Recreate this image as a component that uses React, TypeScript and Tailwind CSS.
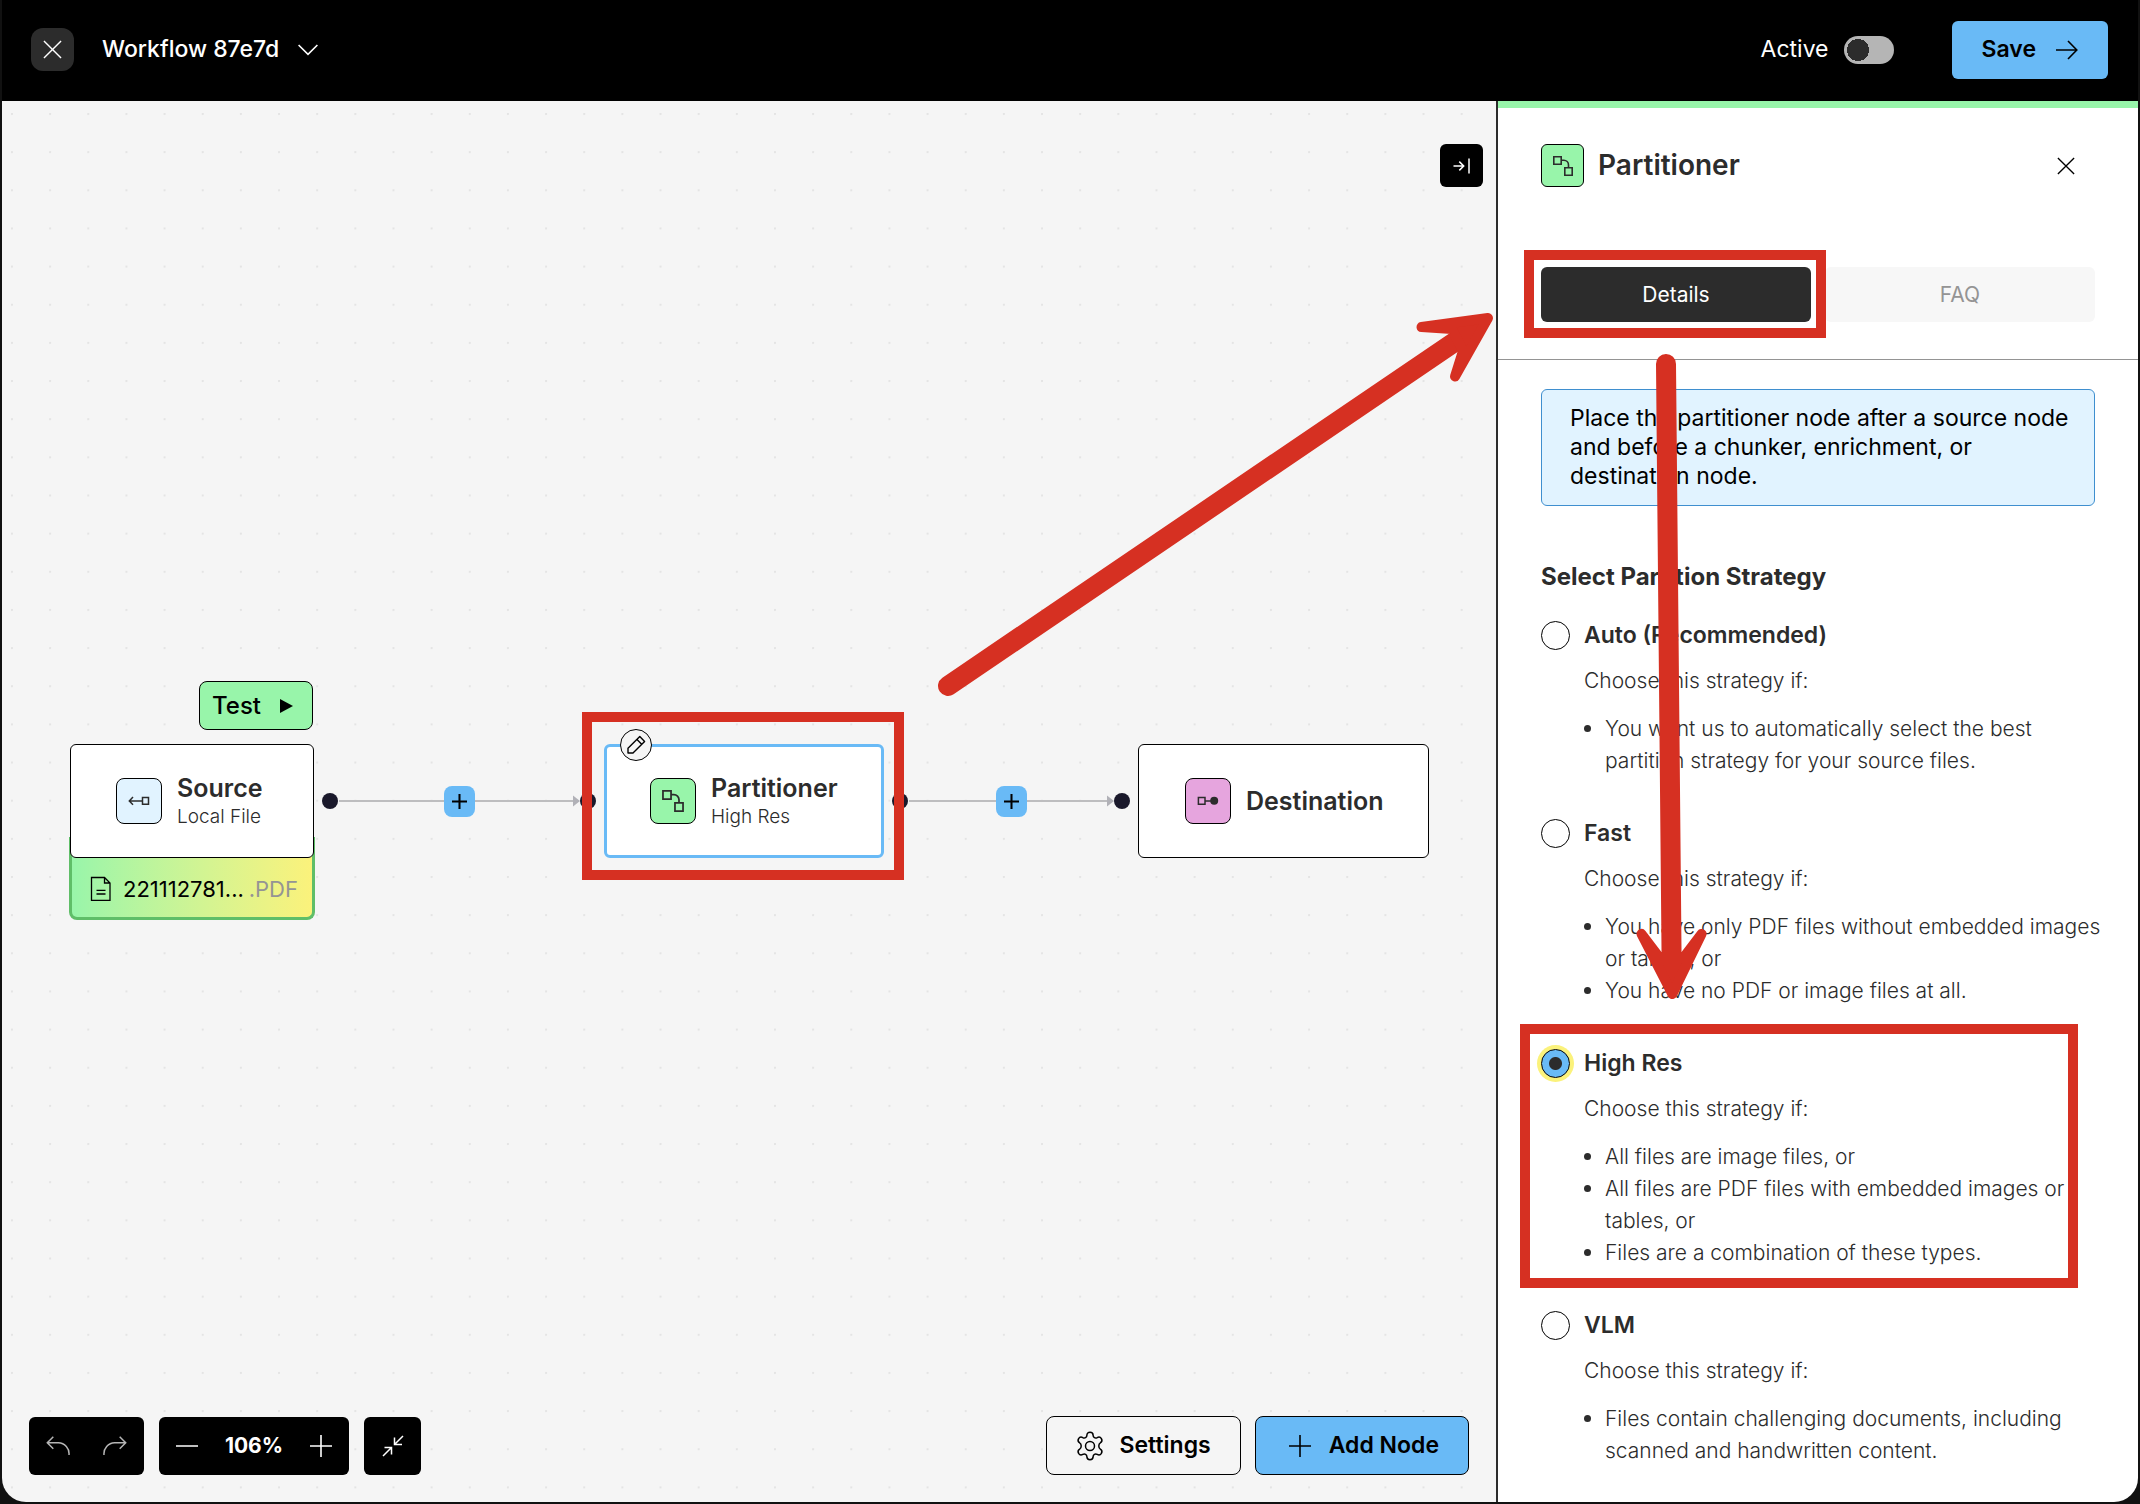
import React, { useId, useState } from "react";
import clsx from "clsx";

interface Strategy {
  id: string;
  label: string;
  reasons: string[];
}

const STRATEGIES: Strategy[] = [
  {
    id: "auto",
    label: "Auto (Recommended)",
    reasons: [
      "You want us to automatically select the best partition strategy for your source files.",
    ],
  },
  {
    id: "fast",
    label: "Fast",
    reasons: [
      "You have only PDF files without embedded images or tables, or",
      "You have no PDF or image files at all.",
    ],
  },
  {
    id: "hi_res",
    label: "High Res",
    reasons: [
      "All files are image files, or",
      "All files are PDF files with embedded images or tables, or",
      "Files are a combination of these types.",
    ],
  },
  {
    id: "vlm",
    label: "VLM",
    reasons: [
      "Files contain challenging documents, including scanned and handwritten content.",
    ],
  },
];

/* ---------- Icons ---------- */

const CloseIcon = ({ className }: { className?: string }) => (
  <svg viewBox="0 0 20 20" className={className} fill="none" stroke="currentColor" strokeWidth="1.5">
    <path d="M1 1 19 19M19 1 1 19" />
  </svg>
);

const ChevronIcon = () => (
  <svg viewBox="0 0 20 12" className="h-3 w-5" fill="none" stroke="currentColor" strokeWidth="1.6">
    <path d="m.6 1 9.4 9.4L19.400 1" />
  </svg>
);

const ArrowRightIcon = () => (
  <svg viewBox="0 0 22 20" className="h-5 w-[22px]" fill="none" stroke="currentColor" strokeWidth="1.6">
    <path d="M0 10h20.500M12 1l8.800 9L12 19" />
  </svg>
);

const PlusIcon = ({ className }: { className?: string }) => (
  <svg viewBox="0 0 22 22" className={className} fill="none" stroke="currentColor">
    <path d="M0 11h22M11 0v22" />
  </svg>
);

const PartitionIcon = ({ className }: { className?: string }) => (
  <svg viewBox="0 0 22 22" className={className} fill="none" stroke="currentColor" strokeWidth="1.6">
    <path d="M1.800 1.800h7.400v7.400H1.800zM12.800 12.800h7.400v7.400h-7.400z" />
    <path d="M9.200 5.200h2.600a4.700 4.700 0 0 1 4.700 4.700v2.900" />
  </svg>
);

const SourceIcon = () => (
  <svg viewBox="0 0 22 12" className="h-3 w-[22px]" fill="none" stroke="currentColor" strokeWidth="1.500">
    <path d="M14.500 2.600h6v6.600h-6zM14.500 5.900H1.500M5 2 1.300 5.900 5 9.800" />
  </svg>
);

const DestinationIcon = () => (
  <svg viewBox="0 0 22 12" className="h-3 w-[22px]" fill="none" stroke="currentColor" strokeWidth="1.500">
    <path d="M1.400 2.500h6.600v6.800H1.400zM8 5.900h7" />
    <circle cx="17.200" cy="5.700" r="4" fill="currentColor" stroke="none" />
  </svg>
);

const FileIcon = () => (
  <svg viewBox="0 0 22 26" className="h-[26px] w-[22px] shrink-0" fill="none" stroke="currentColor" strokeWidth="1.300">
    <path d="M1.500 1.500h13l5.500 5.500v17.300H1.500zM14.500 1.500V7H20M6.500 14.300h9M6.500 18h9" />
  </svg>
);

const PencilIcon = () => (
  <svg viewBox="0 0 20 20" className="size-5" fill="none" stroke="currentColor" strokeWidth="1.400" strokeLinejoin="round">
    <path d="M2 18v-4.800L13.800 1.600l4.800 4.800L7 18zM11 4.500l4.700 4.700" />
  </svg>
);

const CollapseRightIcon = () => (
  <svg viewBox="0 0 18 16" className="h-4 w-[18px]" fill="none" stroke="currentColor" strokeWidth="1.500">
    <path d="M.5 8h10M6.300 3.600 10.700 8l-4.400 4.400M16 .5v15" />
  </svg>
);

const UndoIcon = ({ className }: { className?: string }) => (
  <svg viewBox="0 0 24 20" className={clsx("h-5 w-6", className)} fill="none" stroke="currentColor" strokeWidth="1.500">
    <path d="M7.300.8 1.300 6.800l6 6M1.300 6.800h11A11 11 0 0 1 23 19" />
  </svg>
);

const ShrinkIcon = () => (
  <svg viewBox="0 0 22 22" className="size-[22px]" fill="none" stroke="currentColor" strokeWidth="1.500">
    <path d="M21 1l-8.500 8.500M12.500 2.500v7H20M1 21l8.500-8.500M2.500 12.500h7v7" />
  </svg>
);

const GearIcon = () => (
  <svg viewBox="0 0 28 30" className="h-[30px] w-7" fill="none" stroke="currentColor" strokeWidth="1.500" strokeLinejoin="round">
    <circle cx="14" cy="15" r="4.500" />
    <path d="M10.900 4.200C10.900 2.300 12.200 1.300 14 1.300s3.100 1 3.100 2.900c0 2.300 2.100 3.500 4.100 2.400 1.700-1 3.300-.4 4.200 1.100.9 1.600.6 3.200-1.100 4.200-2 1.100-2 5.100 0 6.200 1.700 1 2 2.600 1.100 4.200-.9 1.500-2.500 2.100-4.200 1.100-2-1.100-4.100.1-4.100 2.400 0 1.900-1.300 2.900-3.100 2.900s-3.100-1-3.100-2.900c0-2.300-2.100-3.500-4.100-2.400-1.700 1-3.300.4-4.200-1.100-.9-1.600-.6-3.200 1.100-4.200 2-1.100 2-5.100 0-6.200-1.700-1-2-2.600-1.100-4.200.9-1.500 2.500-2.100 4.200-1.100 2 1.100 4.100-.1 4.100-2.400Z" />
  </svg>
);

/* ---------- Canvas ---------- */

interface FlowNodeProps {
  title: string;
  subtitle?: string;
  icon: React.ReactNode;
  iconClass: string;
  className: string;
}

const FlowNode = ({ title, subtitle, icon, iconClass, className }: FlowNodeProps) => (
  <div
    className={clsx(
      "absolute top-[643px] flex h-[114px] items-center gap-[15px] rounded-md bg-white text-[#2c2c2c]",
      className,
    )}
  >
    <span
      className={clsx(
        "flex size-[46px] shrink-0 items-center justify-center rounded-lg border border-black",
        iconClass,
      )}
    >
      {icon}
    </span>
    <div>
      <h3 className="text-[25px] leading-7 font-semibold">{title}</h3>
      {subtitle && <p className="mt-[3px] text-[19px] leading-6 font-light">{subtitle}</p>}
    </div>
  </div>
);

const AddBetween = ({ className }: { className: string }) => (
  <button
    type="button"
    aria-label="Add node here"
    className={clsx(
      "absolute top-[685px] flex size-[31px] items-center justify-center rounded-lg bg-[#69baf6] text-black",
      className,
    )}
  >
    <PlusIcon className="size-[15px] stroke-3" />
  </button>
);

const Edges = () => {
  const dots = useId();
  return (
    <svg className="absolute inset-0 size-full" aria-hidden="true">
      <defs>
        <pattern id={dots} x="9" y="12" width="38.150" height="38.150" patternUnits="userSpaceOnUse">
          <circle cx="1" cy="1" r="1.100" fill="#e3e3e3" />
        </pattern>
      </defs>
      <rect width="100%" height="100%" fill={`url(#${dots})`} />
      <g stroke="#bdbdbf" strokeWidth="2">
        <path d="M337 700h235M907 700h200" />
      </g>
      <g fill="#b1b1b7">
        <path d="M571 694.500 578 700 571 705.500zM1105 694.500 1112 700 1105 705.500z" />
      </g>
      <g fill="#1a192b">
        <circle cx="328" cy="700" r="8" />
        <circle cx="586" cy="700" r="8" />
        <circle cx="898" cy="700" r="8" />
        <circle cx="1120" cy="700" r="8" />
      </g>
    </svg>
  );
};

const Canvas = () => (
  <main className="relative flex min-w-0 flex-1 flex-col justify-between bg-[#f5f5f5]">
    <Edges />

    <button
      type="button"
      className="absolute top-[580px] left-[197px] flex h-[49px] w-[114px] items-center justify-between rounded-lg border border-black bg-[#98f5aa] pr-[19px] pl-3 text-2xl font-medium text-black"
    >
      Test
      <svg viewBox="0 0 13 14" className="h-3.5 w-[13px]" fill="currentColor">
        <path d="M0 0 13 7 0 14z" />
      </svg>
    </button>

    <div className="absolute top-[736px] left-[67px] flex h-[83px] w-[246px] items-center gap-[11px] rounded-b-lg border-3 border-t-0 border-[#5fbe68] bg-linear-to-r from-[#98f5aa] to-[#fbf27b] pt-6 pr-3.5 pl-[18px] text-[22px] text-black">
      <FileIcon />
      <span className="flex flex-1 justify-between">
        <span>221112781...</span>
        <span className="text-[#949494]">.PDF</span>
      </span>
    </div>
    <FlowNode
      title="Source"
      subtitle="Local File"
      icon={<SourceIcon />}
      iconClass="bg-[#e1f3ff]"
      className="left-[68px] w-[244px] border border-black pl-[45px]"
    />

    <AddBetween className="left-[442px]" />

    <FlowNode
      title="Partitioner"
      subtitle="High Res"
      icon={<PartitionIcon className="size-6" />}
      iconClass="bg-[#98f5aa]"
      className="left-[602px] w-[280px] border-3 border-[#69baf6] pl-[43px]"
    />
    <button
      type="button"
      aria-label="Edit node"
      className="absolute top-[628px] left-[618px] flex size-8 items-center justify-center rounded-full border border-black bg-[#f5f5f5] text-black"
    >
      <PencilIcon />
    </button>
    <div className="absolute top-[611px] left-[580px] h-[168px] w-[322px] border-10 border-[#d63022]" />

    <AddBetween className="left-[994px]" />

    <FlowNode
      title="Destination"
      icon={<DestinationIcon />}
      iconClass="bg-[#e6a5de]"
      className="left-[1136px] w-[291px] border border-black pl-[46px]"
    />

    <div className="relative flex justify-end pt-[43px] pr-[13px]">
      <button
        type="button"
        aria-label="Collapse panel"
        className="flex size-[43px] items-center justify-center rounded-md bg-black text-white"
      >
        <CollapseRightIcon />
      </button>
    </div>

    <div className="relative flex items-end justify-between p-[27px] pt-0">
      <div className="flex gap-[15px] text-white">
        <div className="flex h-[58px] items-center gap-[33px] rounded-md bg-black px-[17px] text-[#b5b5b5]">
          <button type="button" aria-label="Undo">
            <UndoIcon />
          </button>
          <button type="button" aria-label="Redo">
            <UndoIcon className="-scale-x-100" />
          </button>
        </div>
        <div className="flex h-[58px] w-[190px] items-center justify-between rounded-md bg-black px-[17px]">
          <button type="button" aria-label="Zoom out">
            <svg viewBox="0 0 22 22" className="size-[22px]" stroke="currentColor" strokeWidth="1.600">
              <path d="M0 11h22" />
            </svg>
          </button>
          <span className="text-[21px] font-bold">106%</span>
          <button type="button" aria-label="Zoom in">
            <PlusIcon className="size-[22px] stroke-[1.6]" />
          </button>
        </div>
        <button
          type="button"
          aria-label="Fit view"
          className="flex h-[58px] w-[57px] items-center justify-center rounded-md bg-black"
        >
          <ShrinkIcon />
        </button>
      </div>
      <div className="flex gap-3.5 text-[23px] font-semibold text-black">
        <button
          type="button"
          className="flex h-[59px] items-center gap-[15px] rounded-lg border border-black bg-[#f5f5f5] px-[29px]"
        >
          <GearIcon />
          Settings
        </button>
        <button
          type="button"
          className="flex h-[59px] items-center gap-[18px] rounded-lg border border-black bg-[#69baf6] pr-[29px] pl-[33px]"
        >
          <PlusIcon className="size-[22px] stroke-[1.6]" />
          Add Node
        </button>
      </div>
    </div>
  </main>
);

/* ---------- Side panel ---------- */

interface StrategyOptionProps {
  strategy: Strategy;
  checked: boolean;
  onSelect: (id: string) => void;
}

const StrategyOption = ({ strategy, checked, onSelect }: StrategyOptionProps) => (
  <li className="relative">
    <div className="flex h-[30px] items-center gap-3.5">
      <input
        type="radio"
        name="strategy"
        id={strategy.id}
        checked={checked}
        onChange={() => onSelect(strategy.id)}
        className="size-[29px] shrink-0 appearance-none rounded-full border border-black bg-white checked:bg-[radial-gradient(circle,#2c2c2c_6px,#69baf6_7px)] checked:ring-4 checked:ring-[#fbf27b]"
      />
      <label htmlFor={strategy.id} className="text-[23px] font-semibold">
        {strategy.label}
      </label>
    </div>
    <div className="mt-[15px] -mr-2 ml-[43px] text-[21px] leading-8 font-light">
      <p>Choose this strategy if:</p>
      <ul className="mt-4">
        {strategy.reasons.map((reason) => (
          <li key={reason} className="flex gap-3.5">
            <span className="mt-3 size-[7px] shrink-0 rounded-full bg-current" />
            {reason}
          </li>
        ))}
      </ul>
    </div>
    {checked && (
      <div className="absolute -inset-x-[21px] -top-6 -bottom-[19px] mr-[38px] border-10 border-[#d63022]" />
    )}
  </li>
);

const PartitionerPanel = () => {
  const [selected, setSelected] = useState("hi_res");

  return (
    <aside className="flex w-[642px] shrink-0 flex-col border-l-2 border-[#2c2c2c] bg-white text-[#2c2c2c]">
      <div className="border-t-7 border-[#98f5aa] px-[43px] pt-9">
        <div className="flex items-center gap-3.5">
          <span className="flex size-[43px] items-center justify-center rounded-md border border-black bg-[#98f5aa]">
            <PartitionIcon className="size-[22px]" />
          </span>
          <h2 className="flex-1 pb-0.5 text-[28px] leading-8 font-semibold">Partitioner</h2>
          <button type="button" aria-label="Close panel" className="mr-5 text-black">
            <CloseIcon className="size-[18px]" />
          </button>
        </div>
      </div>

      <div role="tablist" className="mt-20 flex gap-3.5 border-b border-[#949494] px-[43px] pb-[37px] text-[21px]">
        <div className="relative flex-1">
          <button
            type="button"
            role="tab"
            aria-selected="true"
            className="h-[55px] w-full rounded-md bg-[#2c2c2c] text-white"
          >
            Details
          </button>
          <div className="absolute -inset-x-[17px] -top-[17px] -bottom-4 mr-0.5 border-10 border-[#d63022]" />
        </div>
        <button
          type="button"
          role="tab"
          aria-selected="false"
          className="h-[55px] flex-1 rounded-md bg-[#f7f7f7] text-[#949494]"
        >
          FAQ
        </button>
      </div>

      <div className="px-[43px] pt-[29px] pb-8">
        <p className="rounded-md border border-[#3f8fcf] bg-[#e1f3ff] py-3.5 pr-5 pl-7 text-[23px] leading-[29px] text-black">
          Place the partitioner node after a source node and before a chunker, enrichment, or
          destination node.
        </p>
        <fieldset className="mt-[55px]">
          <legend className="text-2xl leading-8 font-bold">Select Partition Strategy</legend>
          <ul className="mt-[27px] flex flex-col gap-[41px]">
            {STRATEGIES.map((strategy) => (
              <StrategyOption
                key={strategy.id}
                strategy={strategy}
                checked={selected === strategy.id}
                onSelect={setSelected}
              />
            ))}
          </ul>
        </fieldset>
      </div>
    </aside>
  );
};

/* ---------- Page ---------- */

const TopBar = () => (
  <header className="flex h-[101px] items-center bg-black pr-[30px] pb-0.5 pl-[29px] text-[23px] text-white">
    <button
      type="button"
      aria-label="Close workflow"
      className="flex size-[43px] items-center justify-center rounded-xl bg-[#2c2c2c]"
    >
      <CloseIcon className="size-[19px]" />
    </button>
    <button type="button" className="ml-7 flex items-center gap-[19px] font-medium">
      Workflow 87e7d
      <ChevronIcon />
    </button>

    <label className="ml-auto flex items-center gap-[15px]">
      Active
      <input
        type="checkbox"
        role="switch"
        className="h-7 w-[50px] appearance-none rounded-full bg-[#b5b5b5] bg-[radial-gradient(circle_at_14px_14px,#2c2c2c_11px,transparent_11px)]"
      />
    </label>
    <button
      type="button"
      className="ml-[58px] flex h-[58px] items-center gap-5 rounded-md bg-[#69baf6] px-[30px] font-semibold text-black"
    >
      Save
      <ArrowRightIcon />
    </button>
  </header>
);

// Arrows leading from the node to the tab, and from the tab to the selected option
const GuideArrows = () => (
  <svg
    className="pointer-events-none absolute inset-0 size-full"
    fill="#d63022"
    stroke="#d63022"
    strokeLinecap="round"
    strokeLinejoin="round"
    aria-hidden="true"
  >
    <g strokeWidth="20">
      <path d="M948 686 1456 341" />
      <path d="M1666 364 1671.600 960" />
    </g>
    <g strokeWidth="10">
      <path d="M1488 318 1421.500 327 1452 329 1463 351 1455 376.500z" />
      <path d="M1672.300 994 1641.500 934 1659 957H1684L1701.500 934z" />
    </g>
  </svg>
);

export default function App() {
  return (
    <div className="relative flex min-h-screen flex-col bg-[#111111] px-0.5 pb-0.5 font-[Inter,sans-serif]">
      <TopBar />
      <div className="flex flex-1 overflow-hidden rounded-b-3xl">
        <Canvas />
        <PartitionerPanel />
      </div>
      <GuideArrows />
    </div>
  );
}
